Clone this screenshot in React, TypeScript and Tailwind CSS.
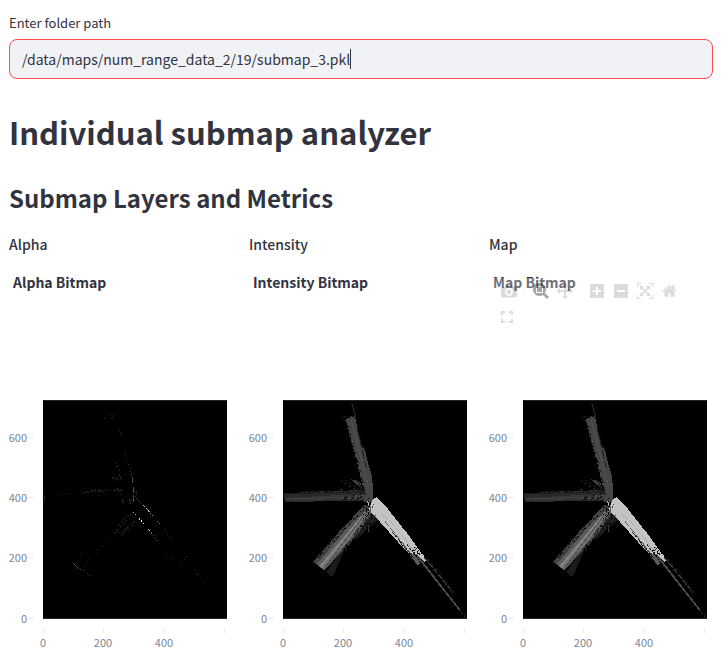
import React from "react";

type Point = [number, number];

// from, to, spread at each end, number of cells, palette
interface Scatter {
  from: Point;
  to: Point;
  spread: [number, number];
  count: number;
  fills: string[];
}

interface Beam {
  points: string;
  fill: string;
}

interface Streak {
  d: string;
  stroke: string;
  width?: number;
  dash?: string;
}

// Bitmap cells are 3 units wide, on a grid of 184 x 219 cells.
const CELL = 3;

function scatterCells(s: Scatter, seed: number) {
  let state = seed * 7919 + 17;
  const next = () => {
    state = (state * 1103515245 + 12345) % 2147483648;
    return state / 2147483648;
  };
  const dx = s.to[0] - s.from[0];
  const dy = s.to[1] - s.from[1];
  const len = Math.hypot(dx, dy);
  return Array.from({ length: s.count }, () => {
    const t = next();
    const w = (next() - 0.5) * (s.spread[0] + (s.spread[1] - s.spread[0]) * t);
    const x = s.from[0] + dx * t - (dy / len) * w;
    const y = s.from[1] + dy * t + (dx / len) * w;
    return {
      x: Math.round(x / CELL) * CELL,
      y: Math.round(y / CELL) * CELL,
      fill: s.fills[Math.floor(next() * s.fills.length)],
    };
  });
}

const alphaScatter: Scatter[] = [
  { from: [180, 50], to: [218, 46], spread: [14, 14], count: 16, fills: ["#1e1e1e", "#161616"] },
  { from: [227, 85], to: [232, 104], spread: [4, 4], count: 6, fills: ["#222"] },
  { from: [244, 146], to: [268, 240], spread: [3, 3], count: 15, fills: ["#3a3a3a", "#282828"] },
  { from: [216, 180], to: [234, 238], spread: [5, 5], count: 10, fills: ["#333", "#1c1c1c"] },
  { from: [205, 236], to: [234, 232], spread: [9, 9], count: 16, fills: ["#242424", "#1c1c1c"] },
  { from: [130, 272], to: [236, 266], spread: [6, 12], count: 55, fills: ["#282828", "#1e1e1e", "#161616"] },
  { from: [40, 281], to: [130, 276], spread: [4, 8], count: 14, fills: ["#1e1e1e", "#161616"] },
  { from: [234, 280], to: [243, 318], spread: [6, 6], count: 9, fills: ["#333", "#1c1c1c"] },
  { from: [253, 296], to: [266, 310], spread: [8, 8], count: 5, fills: ["#444"] },
  { from: [275, 268], to: [279, 300], spread: [8, 8], count: 8, fills: ["#242424"] },
  { from: [266, 330], to: [210, 400], spread: [18, 10], count: 55, fills: ["#1c1c1c", "#141414"] },
  { from: [288, 358], to: [230, 400], spread: [12, 12], count: 50, fills: ["#1c1c1c", "#141414"] },
  { from: [210, 400], to: [112, 506], spread: [6, 8], count: 16, fills: ["#161616"] },
  { from: [146, 426], to: [110, 466], spread: [5, 5], count: 6, fills: ["#121212"] },
  { from: [120, 507], to: [142, 530], spread: [3, 3], count: 7, fills: ["#222"] },
  { from: [356, 380], to: [400, 438], spread: [4, 5], count: 12, fills: ["#1a1a1a"] },
  { from: [364, 454], to: [406, 496], spread: [4, 4], count: 6, fills: ["#181818"] },
  { from: [405, 496], to: [432, 470], spread: [4, 4], count: 7, fills: ["#2a2a2a", "#181818"] },
  { from: [452, 508], to: [490, 554], spread: [5, 5], count: 7, fills: ["#1c1c1c"] },
];

const alphaStreaks: Streak[] = [
  { d: "M268 232V250M271 262V278M271 285V307", stroke: "#505050" },
  { d: "M280 294L300 315", stroke: "#444", dash: "3 6" },
  { d: "M300 315L318 334", stroke: "#b8b8b8", width: 3, dash: "9 2" },
  { d: "M318 334L332 352", stroke: "#888", dash: "3 4" },
  { d: "M342 364L354 378", stroke: "#777", dash: "3 6" },
  { d: "M270 337L280 346", stroke: "#999", dash: "4 4" },
  { d: "M288 354L304 375", stroke: "#ddd", dash: "5 4" },
  { d: "M315 388L321 393", stroke: "#ddd" },
  { d: "M324 398L344 424", stroke: "#555", dash: "3 7" },
  { d: "M90 490L112 510", stroke: "#4c4c4c", dash: "6 3" },
  { d: "M4 286V307", stroke: "#202020" },
];

const fieldBeams: Beam[] = [
  { points: "187,62 192,54 216,50 222,72 228,98 234,130 247,154 256,195 265,220 270,260 269,306 243,306 237,260 226,205 217,170", fill: "#454545" },
  { points: "202,238 220,240 236,250 238,265 226,258", fill: "#343434" },
  { points: "4,280 90,275 240,270 242,302 5,306", fill: "#292929" },
  { points: "5,294 150,286 240,284 242,300 5,303", fill: "#353535" },
  { points: "129,516 149,532 185,446 238,402 286,347 260,334", fill: "#1b1b1b" },
  { points: "90,485 180,382 246,314 271,330 225,400 124,512", fill: "#444444" },
  { points: "102,492 190,388 262,318 270,330 218,402 124,512", fill: "#5c5c5c" },
  { points: "108,498 205,385 266,323 195,422 118,507", fill: "#777777" },
  { points: "266,300 280,292 314,326 342,362 370,396 400,438 432,480 424,486 397,462 378,462 346,427 264,336", fill: "#c4c4c4" },
  { points: "378,462 397,462 412,492 404,496", fill: "#5a5a5a" },
];

const fieldStreaks: Streak[] = [
  { d: "M206 8L210 22L218 52", stroke: "#303030", width: 3 },
  { d: "M180 54L190 50M194 48H215", stroke: "#282828", dash: "5 3" },
  { d: "M190 66L246 290", stroke: "#0c0c0c", dash: "17 4" },
  { d: "M219 52L225 90L238 140", stroke: "#101010", dash: "22 5" },
  { d: "M223 86L250 204", stroke: "#202020", dash: "27 6" },
  { d: "M205 60L255 255", stroke: "#505050", width: 4 },
  { d: "M172 242L228 275M185 240L234 272", stroke: "#222", dash: "8 7" },
  { d: "M6 281L240 275", stroke: "#151515", dash: "14 4" },
  { d: "M10 297L230 291", stroke: "#424242", dash: "28 5" },
  { d: "M94 485L239 329", stroke: "#222", dash: "3 14" },
  { d: "M112 500L248 335", stroke: "#8a8a8a", width: 3 },
  { d: "M121 508L242 348", stroke: "#505050", width: 3 },
  { d: "M255 374L258 396", stroke: "#393939", width: 4 },
  { d: "M294 344L322 362L390 448", stroke: "#a2a2a2", width: 2, dash: "24 6" },
  { d: "M304 362L396 474", stroke: "#333", width: 2, dash: "20 8" },
  { d: "M328 396L392 474", stroke: "#222", width: 3, dash: "19 7" },
  { d: "M372 434L405 476", stroke: "#333", width: 3, dash: "9 4" },
  { d: "M397 464L511 608", stroke: "#666", width: 2 },
  { d: "M402 466L530 630", stroke: "#4c4c4c", width: 5 },
  { d: "M528 628L550 654", stroke: "#303030", dash: "6 5" },
  { d: "M424 472L510 578", stroke: "#3a3a3a", width: 4, dash: "18 4" },
  { d: "M434 474L505 564", stroke: "#1b1b1b", dash: "12 7" },
];

const fieldScatter: Scatter[] = [
  { from: [216, 175], to: [243, 288], spread: [7, 16], count: 70, fills: ["#000", "#080808"] },
  { from: [191, 66], to: [220, 188], spread: [6, 10], count: 24, fills: ["#000"] },
  { from: [64, 276], to: [242, 270], spread: [4, 14], count: 90, fills: ["#000", "#252525", "#333"] },
  { from: [180, 293], to: [238, 290], spread: [10, 18], count: 55, fills: ["#000", "#484848"] },
  { from: [226, 334], to: [98, 475], spread: [14, 10], count: 55, fills: ["#000", "#111"] },
  { from: [268, 346], to: [180, 450], spread: [30, 8], count: 110, fills: ["#000", "#303030", "#101010"] },
  { from: [240, 336], to: [258, 336], spread: [36, 24], count: 45, fills: ["#000", "#4b4b4b", "#080808"] },
  { from: [257, 292], to: [264, 325], spread: [15, 15], count: 34, fills: ["#000", "#888", "#444", "#d5d5d5"] },
  { from: [282, 350], to: [257, 376], spread: [22, 9], count: 40, fills: ["#111", "#292929"] },
  { from: [330, 342], to: [418, 458], spread: [5, 5], count: 30, fills: ["#000"] },
  { from: [345, 421], to: [388, 472], spread: [4, 12], count: 24, fills: ["#000", "#555"] },
  { from: [385, 440], to: [406, 465], spread: [18, 18], count: 36, fills: ["#000", "#222", "#707070"] },
  { from: [215, 242], to: [232, 257], spread: [12, 12], count: 22, fills: ["#444", "#000"] },
];

interface Layer {
  name: string;
  beams: Beam[];
  streaks: Streak[];
  scatter: Scatter[];
  toolbar?: boolean;
}

const layers: Layer[] = [
  { name: "Alpha", beams: [], streaks: alphaStreaks, scatter: alphaScatter },
  { name: "Intensity", beams: fieldBeams, streaks: fieldStreaks, scatter: fieldScatter },
  { name: "Map", beams: fieldBeams, streaks: fieldStreaks, scatter: fieldScatter, toolbar: true },
];

const yTicks = [
  { label: "600", y: 40 },
  { label: "400", y: 100 },
  { label: "200", y: 160 },
  { label: "0", y: 221 },
];

const xTicks = [
  { label: "0", x: 34 },
  { label: "200", x: 94 },
  { label: "400", x: 155 },
  { label: "", x: 215 },
];

function Heatmap({ layer }: { layer: Layer }) {
  return (
    <svg viewBox="0 0 224 264" className="block w-full" role="img" aria-label={`${layer.name} heatmap`}>
      <svg x="34" y="2" width="184" height="219" viewBox="0 0 552 657" shapeRendering="crispEdges">
        <rect width="552" height="657" fill="#000" />
        {layer.beams.map((b) => (
          <polygon key={b.points} points={b.points} fill={b.fill} />
        ))}
        {layer.streaks.map((s) => (
          <path key={s.d} d={s.d} fill="none" stroke={s.stroke} strokeWidth={s.width ?? 3} strokeDasharray={s.dash} />
        ))}
        {layer.scatter.map((s, i) =>
          scatterCells(s, i + 1).map((c, j) => (
            <rect key={`${i}-${j}`} x={c.x} y={c.y} width={CELL} height={CELL} fill={c.fill} />
          )),
        )}
        <rect width="552" height="3" fill="#222426" />
        <rect y="654" width="552" height="3" fill="#222426" />
      </svg>
      <g fill="#e6eaf1" shapeRendering="crispEdges">
        {yTicks.map((t) => (
          <rect key={t.label} x="20" y={t.y - 1} width="5" height="1" />
        ))}
        {xTicks.map((t) => (
          <rect key={t.x} x={t.x} y="230" width="1" height="5" />
        ))}
      </g>
      <g fill="#808495" fontSize="11">
        {yTicks.map((t) => (
          <text key={t.label} x="18" y={t.y + 4} textAnchor="end">
            {t.label}
          </text>
        ))}
        {xTicks
          .filter((t) => t.label)
          .map((t) => (
            <text key={t.label} x={t.x} y="249" textAnchor="middle">
              {t.label}
            </text>
          ))}
      </g>
    </svg>
  );
}

const tools = {
  camera: "m500 450c-83 0-150-67-150-150 0-83 67-150 150-150 83 0 150 67 150 150 0 83-67 150-150 150z m400 150h-120c-16 0-34 13-39 29l-31 93c-6 15-23 28-40 28h-340c-16 0-34-13-39-28l-31-94c-6-15-23-28-40-28h-120c-55 0-100-45-100-100v-450c0-55 45-100 100-100h800c55 0 100 45 100 100v450c0 55-45 100-100 100z m-400-550c-138 0-250 112-250 250 0 138 112 250 250 250 138 0 250-112 250-250 0-138-112-250-250-250z m365 380c-19 0-35 16-35 35 0 19 16 35 35 35 19 0 35-16 35-35 0-19-16-35-35-35z",
  zoom: "m1000-25l-250 251c40 63 63 138 63 218 0 224-182 406-407 406-224 0-406-182-406-406s183-406 407-406c80 0 155 22 218 62l250-250 125 125z m-812 250l0 438 437 0 0-438-437 0z m62 375l313 0 0-312-313 0 0 312z",
  pan: "m1000 350l-187 188 0-125-250 0 0 250 125 0-188 187-187-187 125 0 0-250-250 0 0 125-188-188 186-187 0 125 252 0 0-250-125 0 187-188 188 188-125 0 0 250 250 0 0-126 187 188z",
  plus: "m1 787l0-875 875 0 0 875-875 0z m687-500l-187 0 0-187-125 0 0 187-188 0 0 125 188 0 0 187 125 0 0-187 187 0 0-125z",
  minus: "m0 788l0-876 875 0 0 876-875 0z m688-500l-500 0 0 125 500 0 0-125z",
  autoscale: "m250 850l-187 0-63 0 0-62 0-188 63 0 0 188 187 0 0 62z m688 0l-188 0 0-62 188 0 0-188 62 0 0 188 0 62-62 0z m-875-938l0 188-63 0 0-188 0-62 63 0 187 0 0 62-187 0z m875 188l0-188-188 0 0-62 188 0 62 0 0 62 0 188-62 0z m-125 188l-1 0-93-94-156 156 156 156 92-93 2 0 0 250-250 0 0-2 93-92-156-156-156 156 94 92 0 2-250 0 0-250 0 0 93 93 157-156-157-156-93 94 0 0 0-250 250 0 0 0-94 93 156 157 156-157-93-93 0 0 250 0 0 250z",
  home: "m786 296v-267q0-15-11-26t-25-10h-214v214h-143v-214h-214q-15 0-25 10t-11 26v267q0 1 0 2t0 2l321 264 321-264q1-1 1-4z m124 39l-34-41q-5-5-12-6h-2q-7 0-12 3l-386 322-386-322q-7-4-13-4-7 2-12 7l-35 41q-4 5-3 12t6 11l401 334q18 15 42 15t43-15l136-114v109q0 8 5 13t13 5h107q8 0 13-5t5-13v-227l122-102q5-5 6-12t-4-13z",
};

function Tool({ label, path, width = 1000, active = false }: { label: string; path: string; width?: number; active?: boolean }) {
  return (
    <button
      type="button"
      aria-label={label}
      className={`flex h-[26px] w-6 items-center justify-center ${active ? "text-black/35" : "text-black/14"}`}
    >
      <svg viewBox={`0 0 ${width} 1000`} className="h-4" fill="currentColor" aria-hidden="true">
        <path d={path} transform="matrix(1 0 0 -1 0 850)" />
      </svg>
    </button>
  );
}

function ModeBar() {
  return (
    <div className="absolute inset-x-0 top-4 flex flex-wrap bg-white/30">
      <div className="flex pl-2">
        <Tool label="Download plot as a png" path={tools.camera} />
      </div>
      <div className="flex pl-2">
        <Tool label="Zoom" path={tools.zoom} active />
        <Tool label="Pan" path={tools.pan} />
      </div>
      <div className="flex pl-2">
        <Tool label="Zoom in" path={tools.plus} width={875} />
        <Tool label="Zoom out" path={tools.minus} width={875} />
        <Tool label="Autoscale" path={tools.autoscale} />
        <Tool label="Reset axes" path={tools.home} width={928} />
      </div>
      <div className="flex w-full pl-3">
        <button type="button" aria-label="Fullscreen" className="flex h-[26px] items-center text-black/14">
          <svg viewBox="0 0 12 12" className="size-3" fill="none" stroke="currentColor" strokeWidth="2" aria-hidden="true">
            <path d="M1 4V1H4M8 1H11V4M11 8V11H8M4 11H1V8" />
          </svg>
        </button>
      </div>
    </div>
  );
}

export default function App() {
  return (
    <main className="bg-white pr-[15px] pl-[9px] pt-3 font-['Source_Sans_Pro','Noto_Sans_CJK_SC','Noto_Sans',sans-serif] text-[#31333f]">
      <label htmlFor="folder" className="block text-[13px] leading-[22px]">
        Enter folder path
      </label>
      <div className="relative mt-[5px]">
        <input
          id="folder"
          type="text"
          spellCheck={false}
          defaultValue="/data/maps/num_range_data_2/19/submap_3.pkl"
          className="block h-10 w-full rounded-lg border border-[#ff4b4b] bg-[#f0f2f6] px-3 text-[14px] caret-[#31333f] outline-none"
        />
        <span className="pointer-events-none absolute top-[10px] left-[341px] h-5 w-px bg-[#31333f]" />
      </div>
      <h1 className="mt-[33px] text-[31px] leading-10 font-bold">Individual submap analyzer</h1>
      <h2 className="mt-[30px] text-[24px] leading-8 font-bold">Submap Layers and Metrics</h2>
      <div className="mt-4 grid grid-cols-3 gap-4">
        {layers.map((layer) => (
          <section key={layer.name}>
            <h3 className="text-[14px] leading-7 font-medium">{layer.name}</h3>
            <figure className="relative mt-1">
              <figcaption className="h-[136px] px-1 pt-2 text-[14px] leading-6 font-bold">{layer.name} Bitmap</figcaption>
              {layer.toolbar && <ModeBar />}
              <Heatmap layer={layer} />
            </figure>
          </section>
        ))}
      </div>
    </main>
  );
}
